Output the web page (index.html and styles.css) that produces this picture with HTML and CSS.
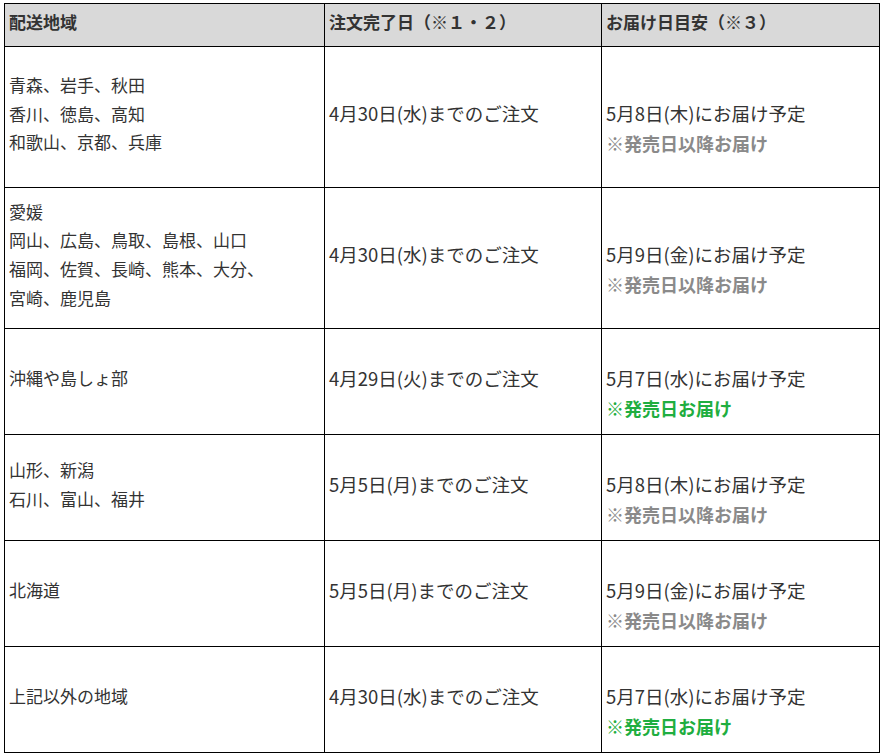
FILE: index.html
```html
<!DOCTYPE html>
<html lang="ja">
<head>
<meta charset="utf-8">
<title>配送スケジュール</title>
<link rel="stylesheet" href="styles.css">
</head>
<body>
<table class="schedule">
  <colgroup>
    <col class="c-area">
    <col class="c-order">
    <col class="c-deliver">
  </colgroup>
  <thead>
    <tr class="head">
      <th>配送地域</th>
      <th>注文完了日（※１・２）</th>
      <th>お届け日目安（※３）</th>
    </tr>
  </thead>
  <tbody>
    <tr class="tall">
      <td class="area">青森、岩手、秋田<br>香川、徳島、高知<br>和歌山、京都、兵庫</td>
      <td class="order">4月30日(水)までのご注文</td>
      <td class="deliver">5月8日(木)にお届け予定<br><span class="note gray">※発売日以降お届け</span></td>
    </tr>
    <tr class="tall">
      <td class="area">愛媛<br>岡山、広島、鳥取、島根、山口<br>福岡、佐賀、長崎、熊本、大分、<br>宮崎、鹿児島</td>
      <td class="order">4月30日(水)までのご注文</td>
      <td class="deliver">5月9日(金)にお届け予定<br><span class="note gray">※発売日以降お届け</span></td>
    </tr>
    <tr class="short">
      <td class="area">沖縄や島しょ部</td>
      <td class="order">4月29日(火)までのご注文</td>
      <td class="deliver">5月7日(水)にお届け予定<br><span class="note green">※発売日お届け</span></td>
    </tr>
    <tr class="short">
      <td class="area">山形、新潟<br>石川、富山、福井</td>
      <td class="order">5月5日(月)までのご注文</td>
      <td class="deliver">5月8日(木)にお届け予定<br><span class="note gray">※発売日以降お届け</span></td>
    </tr>
    <tr class="short">
      <td class="area">北海道</td>
      <td class="order">5月5日(月)までのご注文</td>
      <td class="deliver">5月9日(金)にお届け予定<br><span class="note gray">※発売日以降お届け</span></td>
    </tr>
    <tr class="short">
      <td class="area">上記以外の地域</td>
      <td class="order">4月30日(水)までのご注文</td>
      <td class="deliver">5月7日(水)にお届け予定<br><span class="note green">※発売日お届け</span></td>
    </tr>
  </tbody>
</table>
</body>
</html>
```
FILE: styles.css
```css
html, body {
  margin: 0;
  padding: 0;
  background: #ffffff;
}

body {
  padding: 3px 0 0 4px;
  font-family: "Noto Sans CJK JP", "Noto Sans", sans-serif;
  font-size: 17px;
  color: #333333;
}

.schedule {
  border-collapse: collapse;
  table-layout: fixed;
  width: 875px;
}

.c-area { width: 320px; }
.c-order { width: 277px; }
.c-deliver { width: 278px; }

.schedule th,
.schedule td {
  border: 1px solid #000000;
  padding: 0 4px 8px 4px;
  text-align: left;
  vertical-align: middle;
  white-space: nowrap;
}

.schedule th {
  background: #d9d9d9;
  font-weight: bold;
  color: #333333;
  font-size: 17px;
  line-height: 29px;
  padding-bottom: 7px;
}

.schedule .area {
  font-size: 17px;
  line-height: 28.6px;
  padding-bottom: 6px;
}

.schedule .order {
  font-size: 18.5px;
  line-height: 30px;
}

.schedule .deliver {
  font-size: 18.5px;
  line-height: 30px;
  padding-top: 30px;
}

.head { height: 43px; }
.tall { height: 141px; }
.short { height: 106px; }

.note {
  font-weight: bold;
  font-size: 18px;
}

.gray { color: #8a8a8a; }
.green { color: #1fae40; }
```
